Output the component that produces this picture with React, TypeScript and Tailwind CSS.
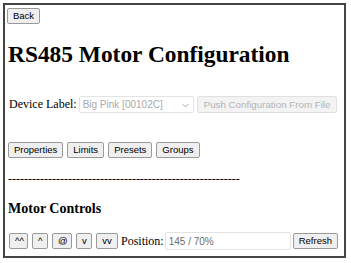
import React from "react";

function Btn({ children, className = "" }: { children: React.ReactNode; className?: string }) {
  return (
    <button
      className={
        "font-['Liberation_Sans',Arial,sans-serif] text-[9.5px] leading-[12px] h-[16px] px-[5px] border border-[#9a9a9a] bg-[#efefef] rounded-[2px] text-black shrink-0 " +
        className
      }
    >
      {children}
    </button>
  );
}

export default function App() {
  return (
    <div className="w-[351px] h-[263px] bg-white pt-[3px] pl-[3px]">
      <div className="w-[343px] h-[255px] border-2 border-[#444] pl-[2px] pt-[3px] font-['Liberation_Serif','Times_New_Roman',serif] text-[12px] text-black leading-[normal]">
        <Btn>Back</Btn>
        <h1 className="text-[23.4px] font-bold leading-[28px] mt-[16px] ml-[1px]">RS485 Motor Configuration</h1>
        <div className="flex items-center mt-[28px] ml-[2px] h-[17px]">
          <span>Device Label:</span>
          <div className="relative ml-[2px] w-[115px] h-[17px] border border-[#e3e3e3] rounded-[2px] bg-white flex items-center">
            <span className="font-['Liberation_Sans',Arial,sans-serif] text-[10px] text-[#a9a9a9] pl-[3px]">Big Pink [00102C]</span>
            <svg className="absolute right-[4px] top-[6px]" width="7" height="5" viewBox="0 0 7 5">
              <path d="M0.5 1 L3.5 4 L6.5 1" fill="none" stroke="#b0b0b0" strokeWidth="1" />
            </svg>
          </div>
          <button className="ml-[3px] font-['Liberation_Sans',Arial,sans-serif] text-[9.75px] leading-[12px] h-[17px] px-[6px] border border-[#e0e0e0] bg-[#f3f3f3] rounded-[2px] text-[#b4b4b4]">
            Push Configuration From File
          </button>
        </div>
        <div className="flex gap-[4px] mt-[29px] ml-[1px]">
          <Btn>Properties</Btn>
          <Btn>Limits</Btn>
          <Btn>Presets</Btn>
          <Btn>Groups</Btn>
        </div>
        <div className="mt-[14px] ml-[1px] leading-[14px]">----------------------------------------------------------</div>
        <h3 className="mt-[15px] ml-[1px] text-[14px] font-bold leading-[16px]">Motor Controls</h3>
        <div className="flex items-center gap-[4px] mt-[15px] ml-[2px]">
          <Btn className="w-[19px] px-0 text-[8px]">^^</Btn>
          <Btn className="w-[16px] px-0 text-[8px]">^</Btn>
          <Btn className="w-[20px] px-0">@</Btn>
          <Btn className="w-[16px] px-0">v</Btn>
          <Btn className="w-[22px] px-0">vv</Btn>
          <span className="-ml-[1px]">Position:</span>
          <div className="-ml-[3px] w-[126px] h-[18px] border border-[#e3e3e3] rounded-[2px] flex items-center pl-[3px] font-['Liberation_Sans',Arial,sans-serif] text-[10px] text-[#6d6d6d]">
            145 / 70%
          </div>
          <Btn className="-ml-[2px]">Refresh</Btn>
        </div>
      </div>
    </div>
  );
}
